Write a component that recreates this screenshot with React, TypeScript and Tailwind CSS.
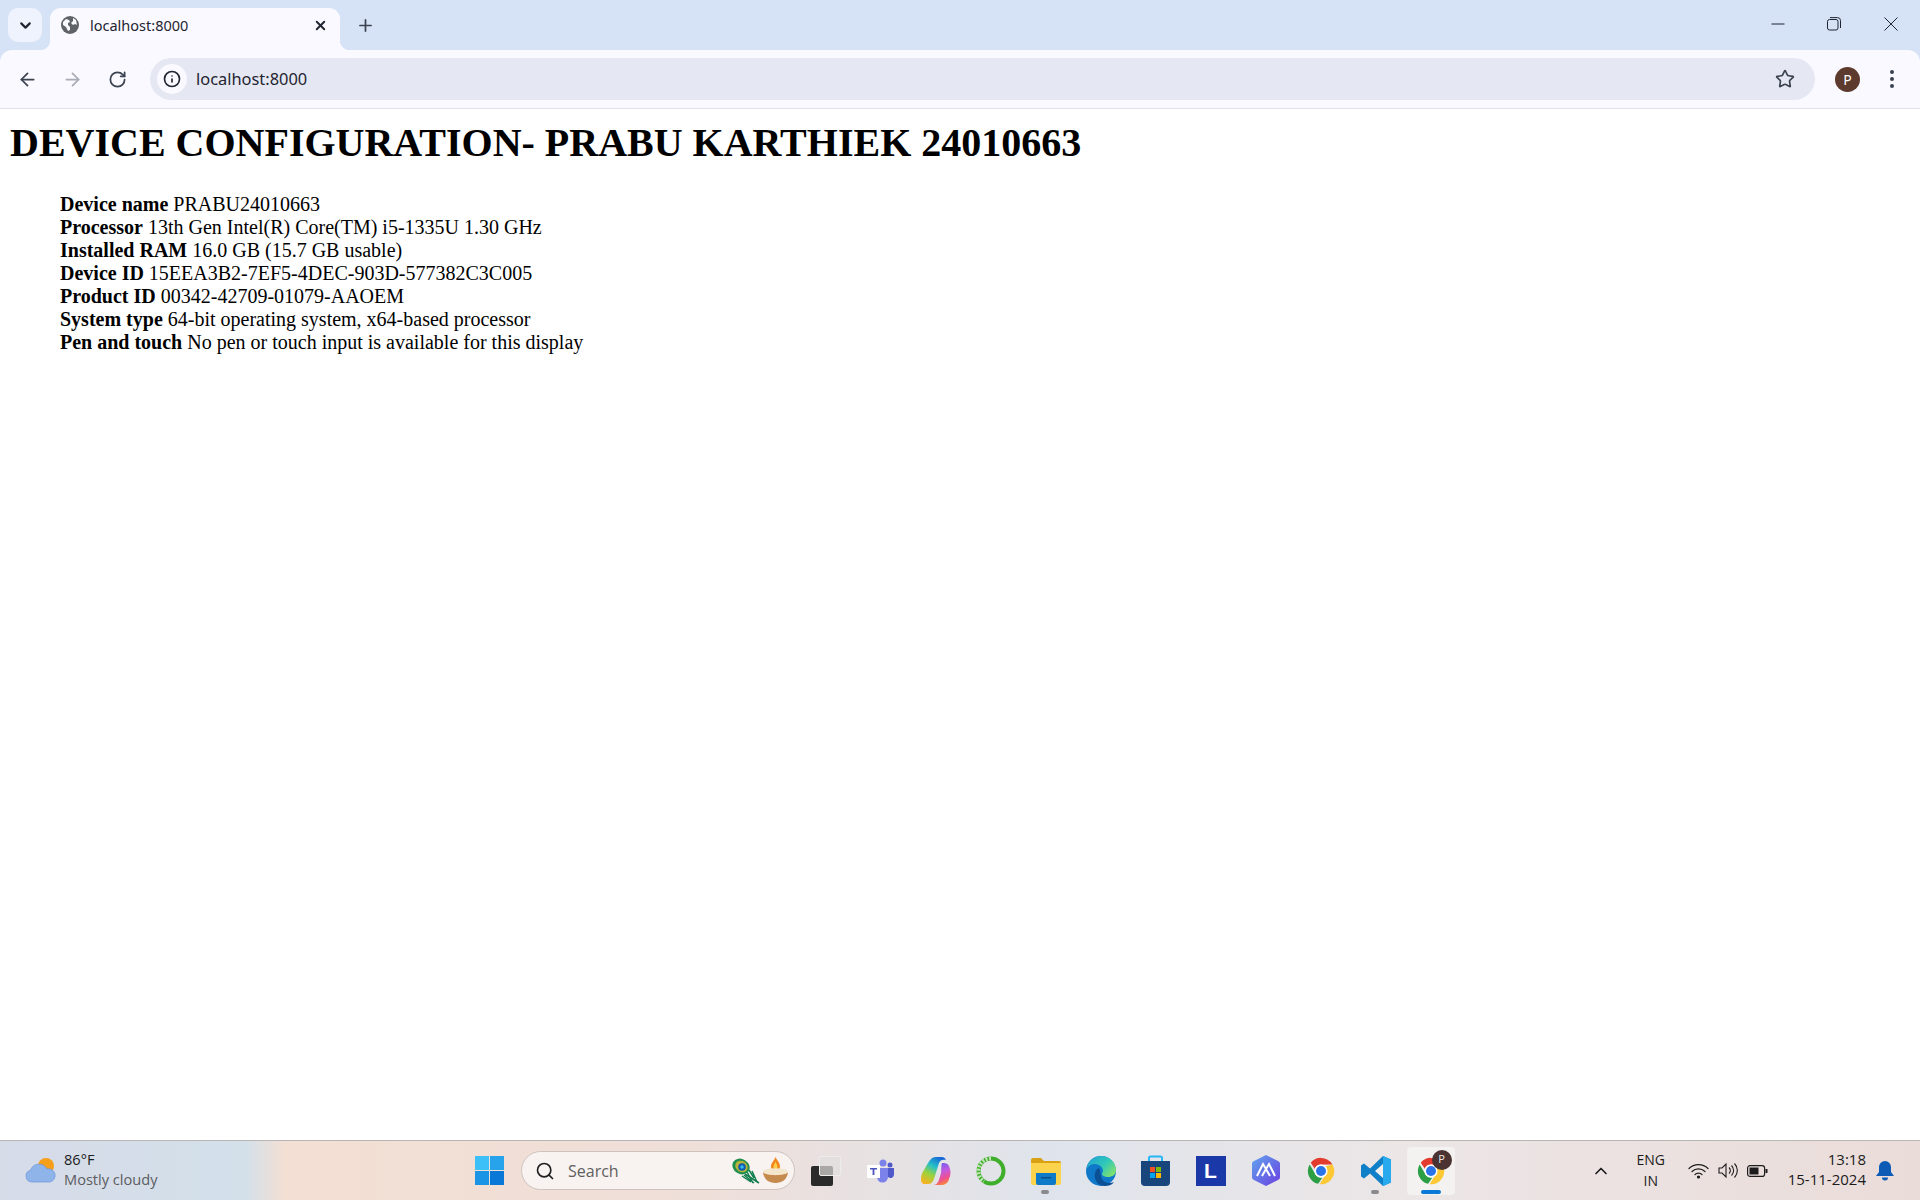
import { ArrowLeft, ArrowRight, ChevronDown, ChevronUp, Info, Plus, RotateCw, Search, Star, X } from 'lucide-react';

const specs = [
  ['Device name', 'PRABU24010663'],
  ['Processor', '13th Gen Intel(R) Core(TM) i5-1335U 1.30 GHz'],
  ['Installed RAM', '16.0 GB (15.7 GB usable)'],
  ['Device ID', '15EEA3B2-7EF5-4DEC-903D-577382C3C005'],
  ['Product ID', '00342-42709-01079-AAOEM'],
  ['System type', '64-bit operating system, x64-based processor'],
  ['Pen and touch', 'No pen or touch input is available for this display'],
];

function ChromeLogo({ size = 30 }: { size?: number }) {
  return (
    <svg width={size} height={size} viewBox="0 0 48 48">
      <path d="M24 3a21 21 0 0 1 18.2 10.5H24a10.5 10.5 0 0 0-9.9 7L7.6 10.8A21 21 0 0 1 24 3z" fill="#e33b2e" />
      <path d="M5.8 13.5 15 29.3A10.5 10.5 0 0 0 26.3 34.3L19.4 44.5A21 21 0 0 1 5.8 13.5z" fill="#2c9f45" />
      <path d="M42.2 13.5A21 21 0 0 1 22 45l9.3-15.9A10.5 10.5 0 0 0 31.5 16.5z" fill="#fcc934" />
      <circle cx="24" cy="24" r="10.5" fill="#fff" />
      <circle cx="24" cy="24" r="8" fill="#2a73e8" />
    </svg>
  );
}

function TaskSlot({ children, dot, className = '' }: { children: React.ReactNode; dot?: boolean; className?: string }) {
  return (
    <div className={`relative flex h-[48px] w-[55px] shrink-0 items-center justify-center ${className}`}>
      {children}
      {dot && <span className="absolute bottom-[1px] left-[23px] h-[4px] w-[8px] rounded-full bg-[#8a8a8e]" />}
    </div>
  );
}

export default function App() {
  return (
    <div className="flex h-screen w-full flex-col overflow-hidden bg-white">
      {/* tab strip */}
      <div className="flex h-[50px] shrink-0 items-end bg-[#d6e3f7] font-['Noto_Sans',sans-serif]">
        <div className="mb-[8px] ml-[8px] flex h-[34px] w-[34px] items-center justify-center rounded-[10px] bg-[#eef3fd]">
          <ChevronDown size={17} strokeWidth={3} className="text-[#1f2430]" />
        </div>
        <div className="relative ml-[8px] flex h-[42px] w-[290px] items-center rounded-t-[11px] bg-[#f9f9ff] pb-[8px] pl-[11px]">
          <span className="absolute bottom-0 left-[-10px] h-[10px] w-[10px] bg-[radial-gradient(circle_at_0_0,transparent_10px,#f9f9ff_10.5px)]" />
          <span className="absolute bottom-0 right-[-10px] h-[10px] w-[10px] bg-[radial-gradient(circle_at_100%_0,transparent_10px,#f9f9ff_10.5px)]" />
          <svg width="18" height="18" viewBox="0 0 18 18">
            <circle cx="9" cy="9" r="9" fill="#5f6368" />
            <path d="M2 6l3-3 3 1 1 2-2 1v2l2 2v3l-2 1-2-4-3-2zM12 2l3 2 1 5-2-1-2 1-2-2 2-2z" fill="#f9f9ff" />
          </svg>
          <span className="ml-[11px] text-[14.5px] leading-none text-[#1f2430]">localhost:8000</span>
          <X size={15} strokeWidth={3} className="absolute right-[12px] top-[10px] text-[#1f2430]" />
        </div>
        <div className="mb-[9px] ml-[9px] flex h-[32px] w-[32px] items-center justify-center">
          <Plus size={19} strokeWidth={2.2} className="text-[#3c4350]" />
        </div>
        <div className="ml-auto mr-[1px] flex h-[50px] items-center text-[#1f2430]">
          <div className="flex w-[56px] justify-center pb-[2px]">
            <svg width="14" height="14" viewBox="0 0 14 14"><path d="M0.5 7h13" stroke="currentColor" strokeWidth="1" /></svg>
          </div>
          <div className="flex w-[56px] justify-center pb-[2px]">
            <svg width="14" height="14" viewBox="0 0 14 14" fill="none" stroke="currentColor" strokeWidth="1">
              <rect x="0.5" y="2.5" width="10.5" height="10.5" rx="2" />
              <path d="M3 .6h7.5a3 3 0 0 1 3 3V11" />
            </svg>
          </div>
          <div className="flex w-[57px] justify-center pb-[2px]">
            <svg width="14" height="14" viewBox="0 0 14 14"><path d="M.5.5l13 13M13.5.5l-13 13" stroke="currentColor" strokeWidth="1" /></svg>
          </div>
        </div>
      </div>

      {/* toolbar */}
      <div className="bg-[#d6e3f7]">
        <div className="flex h-[59px] items-center rounded-t-[12px] border-b border-[#dfe1e8] bg-[#f9f9ff] font-['Noto_Sans',sans-serif]">
          <ArrowLeft size={21} strokeWidth={2} className="ml-[17px] text-[#3c4350]" />
          <ArrowRight size={21} strokeWidth={2} className="ml-[24px] text-[#a9acb4]" />
          <RotateCw size={19} strokeWidth={2.2} className="ml-[25px] text-[#3c4350]" />
          <div className="ml-[23px] flex h-[42px] w-[1665px] items-center rounded-full bg-[#e5e8f3] pl-[7px]">
            <div className="flex h-[30px] w-[30px] items-center justify-center rounded-full bg-[#f9f9ff]">
              <Info size={18} strokeWidth={2.2} className="text-[#1f2430]" />
            </div>
            <span className="ml-[9px] text-[16.4px] leading-none text-[#1f2430]">localhost:8000</span>
            <Star size={20} strokeWidth={2} className="ml-auto mr-[20px] text-[#3c4350]" />
          </div>
          <div className="ml-[20px] flex h-[25px] w-[25px] items-center justify-center rounded-full bg-[#5c3a2e] text-[14px] text-white">P</div>
          <svg width="6" height="20" viewBox="0 0 6 20" className="ml-[29px] text-[#3c4350]" fill="currentColor">
            <circle cx="3" cy="3" r="2" />
            <circle cx="3" cy="10" r="2" />
            <circle cx="3" cy="17" r="2" />
          </svg>
        </div>
      </div>

      {/* page */}
      <main className="min-h-0 flex-1 bg-white px-[10px] pt-[11px] font-['Liberation_Serif',serif] text-black">
        <h1 className="text-[40px] font-bold leading-[46px]">DEVICE CONFIGURATION- PRABU KARTHIEK 24010663</h1>
        <ul className="mt-[27px] pl-[50px] text-[20px] leading-[23px]">
          {specs.map(([label, value]) => (
            <li key={label}>
              <b>{label}</b> {value}
            </li>
          ))}
        </ul>
      </main>

      {/* taskbar */}
      <footer className="flex h-[60px] shrink-0 items-center border-t border-[#b9b5b4] bg-[linear-gradient(90deg,#d6dbe8_0,#d3e0ea_245px,#f3dfd3_285px,#efdfd9_700px,#dfe4ec_1050px,#ece6e6_1400px,#eadcd9_1920px)] font-['Open_Sans',sans-serif]">
        <div className="flex w-[462px] shrink-0 items-center pl-[25px]">
          <svg width="31" height="27" viewBox="0 0 31 27">
            <circle cx="21" cy="9" r="8" fill="#f59f1a" />
            <path d="M7 25a6 6 0 0 1-1.5-11.8A9 9 0 0 1 22 12a6.5 6.5 0 0 1 3 13z" fill="#8fb4ea" stroke="#6f97d8" strokeWidth="0.7" />
          </svg>
          <div className="ml-[8px] flex flex-col pb-[4px] text-[14.6px] leading-[20px]">
            <span className="text-[#1c1c1c]">86°F</span>
            <span className="text-[#5c5c60]">Mostly cloudy</span>
          </div>
        </div>

        <TaskSlot>
          <svg width="29" height="29" viewBox="0 0 29 29">
            <rect width="14" height="14" fill="#3cc0f7" />
            <rect x="15" width="14" height="14" fill="#27a3eb" />
            <rect y="15" width="14" height="14" fill="#1c94e6" />
            <rect x="15" y="15" width="14" height="14" fill="#0a78d6" />
          </svg>
        </TaskSlot>

        <div className="ml-[4px] flex h-[39px] w-[274px] shrink-0 items-center rounded-full border border-[#cfc3bf] bg-[#f8f2f0] pl-[13px]">
          <Search size={20} strokeWidth={2} className="text-[#202020]" />
          <span className="ml-[13px] text-[16px] text-[#5f5f5f]">Search</span>
          <div className="ml-auto mr-[5px] flex items-center">
            <svg width="30" height="28" viewBox="0 0 30 28" fill="none">
              <path d="M13 17l14 9" stroke="#0f7a4a" strokeWidth="1.500" />
              <path d="M14 13l7 13M17 13l5 8M12 18l10 8M10 19l9 6M20 14l5 11" stroke="#128050" strokeWidth="1.500" />
              <ellipse cx="9" cy="9.500" rx="9" ry="7.500" transform="rotate(32 9 9.500)" fill="#1e8f4d" />
              <ellipse cx="9.500" cy="9.500" rx="6.500" ry="5.500" transform="rotate(32 9.500 9.500)" fill="#b9b13a" />
              <circle cx="10" cy="10" r="3.800" fill="#0f5cb0" />
              <circle cx="10" cy="10" r="1.700" fill="#38c0e8" />
            </svg>
            <svg width="27" height="27" viewBox="0 0 27 27">
              <path d="M13.500 0c2 4 4.500 6 4.500 9.500a4.500 4.500 0 0 1-9 0C9 6 12 4 13.500 0z" fill="#f0861c" />
              <path d="M13.500 5c1 2 2 3 2 5a2 2 0 0 1-4 0c0-2 1-3 2-5z" fill="#fbd04b" />
              <ellipse cx="13.500" cy="15" rx="12.500" ry="3.800" fill="#f3e6cc" />
              <path d="M1 15.500c1 7 6 10.500 12.500 10.500S25 22.500 26 15.500c-4 3.500-21 3.500-25 0z" fill="#c58a4e" />
            </svg>
          </div>
        </div>

        <TaskSlot className="ml-[3px]">
          <div className="relative h-[30px] w-[30px]">
            <span className="absolute bottom-0 left-0 h-[20px] w-[22px] rounded-[2px] bg-[#2a2a2a]" />
            <span className="absolute right-0 top-0 h-[20px] w-[22px] rounded-[2px] border border-[#ececec] bg-[#e0dedd]/70" />
          </div>
        </TaskSlot>
        <TaskSlot>
          <svg width="27" height="24" viewBox="0 0 27 24">
            <circle cx="16" cy="4" r="3.500" fill="#7b83eb" />
            <circle cx="23" cy="6" r="2.500" fill="#5059c9" />
            <path d="M10 9h11v9a5.500 5.500 0 0 1-11 0z" fill="#7b83eb" />
            <path d="M21 9h6v7a3.500 3.500 0 0 1-6 2z" fill="#5059c9" />
            <rect y="6" width="13" height="13" fill="#fff" />
            <path d="M3 9h7v1.600H7.400V16H5.600v-5.400H3z" fill="#4b53bc" />
          </svg>
        </TaskSlot>
        <TaskSlot>
          <svg width="30" height="28" viewBox="0 0 30 28">
            <defs>
              <linearGradient id="copA" x1="0.7" y1="0" x2="0.2" y2="1">
                <stop offset="0" stopColor="#1668d8" />
                <stop offset="0.35" stopColor="#27c0c8" />
                <stop offset="0.65" stopColor="#9bd33c" />
                <stop offset="1" stopColor="#f9b020" />
              </linearGradient>
              <linearGradient id="copB" x1="0.3" y1="0" x2="0.6" y2="1">
                <stop offset="0" stopColor="#6a5cf0" />
                <stop offset="0.4" stopColor="#c05ae0" />
                <stop offset="0.75" stopColor="#f0508c" />
                <stop offset="1" stopColor="#f98a30" />
              </linearGradient>
            </defs>
            <path d="M9 3.500C10 1.500 12 0 15 0h6c2 0 3 1 4 3-3-1-6 0-7 3l-5 16c-1 3-3 5-6 5H4c-3 0-4-2-4-5 0-4 1-6 3-9 2-4 4-7 6-10z" fill="url(#copA)" />
            <path d="M21 6c3 0 5.500 0 7 3 2 4 2 9 0 13-1 4-4 6-8 6h-8c3 0 5-2 6-5l2-7c.5-3 0-8 1-10z" fill="url(#copB)" />
          </svg>
        </TaskSlot>
        <TaskSlot>
          <svg width="30" height="30" viewBox="0 0 30 30" fill="none">
            <circle cx="15" cy="15" r="12.500" stroke="#3fae2a" strokeWidth="4" />
            <path d="M15 2.500A12.500 12.500 0 0 0 8 25.500" stroke="#bfe3b5" strokeWidth="4" strokeDasharray="2 1.500" />
          </svg>
        </TaskSlot>
        <TaskSlot dot>
          <svg width="30" height="28" viewBox="0 0 30 28">
            <path d="M0 3a2 2 0 0 1 2-2h8l3 3h15a2 2 0 0 1 2 2v4H0z" fill="#d9a013" />
            <path d="M0 6h30v20a2 2 0 0 1-2 2H2a2 2 0 0 1-2-2z" fill="#fcd34d" />
            <path d="M5 16h20v10a2 2 0 0 1-2 2H7a2 2 0 0 1-2-2z" fill="#0f7bc8" />
            <rect x="10" y="20" width="10" height="1.500" fill="#0a4f8a" />
          </svg>
        </TaskSlot>
        <TaskSlot>
          <svg width="30" height="30" viewBox="0 0 30 30">
            <defs>
              <linearGradient id="edgeA" x1="0" y1="0" x2="1" y2="0.7">
                <stop offset="0" stopColor="#1f9fd8" />
                <stop offset="0.6" stopColor="#30c8b8" />
                <stop offset="1" stopColor="#7ee070" />
              </linearGradient>
            </defs>
            <circle cx="15" cy="15" r="15" fill="#1078c8" />
            <path d="M.5 13C2 5 8 0 15 0c8 0 15 6 15 14 0 5-4 7-8 7-3 0-6-1-6-3 0-1 1-2 1-3 0-4-4-7-8-7-4 0-7 2-8.500 5z" fill="url(#edgeA)" />
            <path d="M13 12c-3 1-5 5-4 10s5 8 10 8c3 0 7-1 9-4-4 2-10 1-12-3-2-3-1-8-3-11z" fill="#0b4f94" />
          </svg>
        </TaskSlot>
        <TaskSlot>
          <svg width="29" height="31" viewBox="0 0 29 31">
            <path d="M8 7V3a1.500 1.500 0 0 1 1.500-1.500h10A1.500 1.500 0 0 1 21 3v4" fill="none" stroke="#29b6f6" strokeWidth="2" />
            <path d="M0 6h29v21a4 4 0 0 1-4 4H4a4 4 0 0 1-4-4z" fill="#17457c" />
            <rect x="9" y="12" width="5" height="5" fill="#f25022" />
            <rect x="15" y="12" width="5" height="5" fill="#7fba00" />
            <rect x="9" y="18" width="5" height="5" fill="#00a4ef" />
            <rect x="15" y="18" width="5" height="5" fill="#ffb900" />
          </svg>
        </TaskSlot>
        <TaskSlot>
          <div className="flex h-[30px] w-[30px] items-center justify-center bg-[#1b38a8] font-['Liberation_Sans',sans-serif] text-[21px] font-bold leading-none text-white">L</div>
        </TaskSlot>
        <TaskSlot>
          <svg width="28" height="31" viewBox="0 0 28 31">
            <defs>
              <linearGradient id="meshA" x1="0" y1="0" x2="1" y2="1">
                <stop offset="0" stopColor="#62a4ee" />
                <stop offset="1" stopColor="#6a3fe0" />
              </linearGradient>
            </defs>
            <path d="M14 0l12 6a3 3 0 0 1 2 3v13a3 3 0 0 1-2 3l-12 6-12-6a3 3 0 0 1-2-3V9a3 3 0 0 1 2-3z" fill="url(#meshA)" />
            <path d="M5 21l6-12 3 5M23 21l-6-12-3 5M10 21l4-7 4 7" fill="none" stroke="#fff" strokeWidth="2" />
          </svg>
        </TaskSlot>
        <TaskSlot>
          <ChromeLogo />
        </TaskSlot>
        <TaskSlot dot>
          <svg width="30" height="30" viewBox="0 0 30 30">
            <path d="M22 0l8 3.500v23L22 30 9 17.500l-6 5-3-2v-11l3-2 6 5z" fill="#0f7fc8" />
            <path d="M22 0l8 3.500v23L22 30z" fill="#29a9ee" />
            <path d="M22 8l-8 7 8 7z" fill="#f4f0ef" />
          </svg>
        </TaskSlot>
        <TaskSlot>
          <div className="relative flex h-[48px] w-[48px] items-center justify-center rounded-[4px] bg-[#f4f1f1]">
            <ChromeLogo />
            <span className="absolute right-[3px] top-[3px] flex h-[20px] w-[20px] items-center justify-center rounded-full bg-[#4a3330] text-[11px] text-[#f0e6e4]">P</span>
            <span className="absolute bottom-[1px] left-[14px] h-[4px] w-[20px] rounded-full bg-[#0a78d6]" />
          </div>
        </TaskSlot>

        {/* tray */}
        <div className="ml-auto flex items-center text-[#1c1c1c]">
          <ChevronUp size={20} strokeWidth={2} className="mr-[23px]" />
          <div className="mr-[20px] flex w-[34px] flex-col items-center pb-[2px] text-[14px] leading-[21px]">
            <span>ENG</span>
            <span>IN</span>
          </div>
          <svg width="21" height="16" viewBox="0 0 21 16" fill="none" stroke="currentColor" strokeWidth="1.200" strokeLinecap="round">
            <path d="M1 5.500a13.500 13.500 0 0 1 19 0M4 8.500a9.500 9.500 0 0 1 13 0M7 11.500a5 5 0 0 1 7 0" />
            <circle cx="10.500" cy="14" r="1" fill="currentColor" />
          </svg>
          <svg width="21" height="17" viewBox="0 0 21 17" fill="none" stroke="currentColor" strokeWidth="1.100" className="ml-[9px]">
            <path d="M1 6h3l4-4v13l-4-4H1z" />
            <path d="M11 5.500a4 4 0 0 1 0 6M13.500 3.500a7 7 0 0 1 0 10M16.500 1.500a10 10 0 0 1 0 14" />
          </svg>
          <svg width="21" height="14" viewBox="0 0 21 14" className="ml-[8px]" fill="none" stroke="currentColor" strokeWidth="1.200">
            <rect x="0.600" y="1.600" width="17" height="10.800" rx="2.500" />
            <rect x="2.500" y="3.500" width="9" height="7" fill="currentColor" stroke="none" />
            <rect x="18.500" y="5" width="2" height="4" fill="currentColor" stroke="none" />
          </svg>
          <div className="ml-[20px] flex flex-col items-end pb-[4px] text-[15px] leading-[20px]">
            <span>13:18</span>
            <span>15-11-2024</span>
          </div>
          <svg width="18" height="20" viewBox="0 0 18 20" className="ml-[10px] mr-[26px]" fill="#0d5bb5">
            <path d="M9 0a6 6 0 0 1 6 6v5l3 4H0l3-4V6a6 6 0 0 1 6-6z" />
            <path d="M6 16.500h6a3 3 0 0 1-6 0z" />
          </svg>
        </div>
      </footer>
    </div>
  );
}
